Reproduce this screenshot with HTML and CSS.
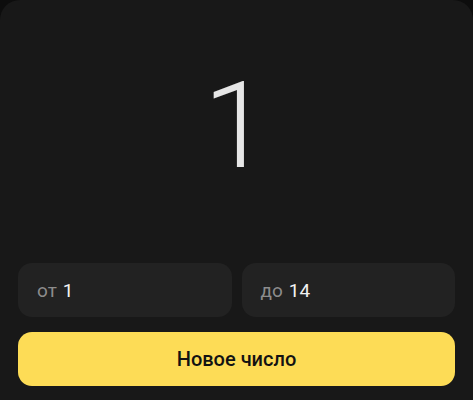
FILE: index.html
```html
<!DOCTYPE html>
<html lang="ru">
<head>
  <meta charset="UTF-8" />
  <title>Случайное число</title>
  <meta name="viewport" content="width=device-width, initial-scale=1.0" />
  <link rel="stylesheet" href="styles.css">
</head>
<body>
  <div class="card">
    <!-- Result -->
    <div class="display">
      <span id="result" class="number">1</span>
    </div>

    <!-- Range -->
    <div class="range">
      <label class="field">
        <span class="hint">от</span>
        <input id="min" type="text" value="1" />
      </label>
      <label class="field">
        <span class="hint">до</span>
        <input id="max" type="text" value="14" />
      </label>
    </div>

    <button id="roll" class="btn">Новое число</button>
  </div>

  <script>
    const minEl = document.getElementById("min");
    const maxEl = document.getElementById("max");
    const resultEl = document.getElementById("result");

    document.getElementById("roll").addEventListener("click", () => {
      let a = parseInt(minEl.value, 10) || 0;
      let b = parseInt(maxEl.value, 10) || 0;
      if (a > b) [a, b] = [b, a];
      resultEl.textContent = a + Math.floor(Math.random() * (b - a + 1));
    });
  </script>
</body>
</html>
```

FILE: styles.css
```css
/* ===== Base ===== */
body {
  margin: 0;
  background: #0d0d0d;
  font-family: Roboto, "Noto Sans", sans-serif;
  color: #ececec;
}
.card {
  background: #181818;
  border-radius: 20px 20px 0 0;
  padding: 0 18px 14px;
  min-height: 400px;
  box-sizing: border-box;
}

/* ===== Result ===== */
.display {
  height: 252px;
  padding-bottom: 11px;
  display: flex;
  align-items: center;
  justify-content: center;
}
.number {
  font-size: 120px;
  font-weight: 300;
  line-height: 1;
  color: #e6e6e6;
}

/* ===== Range ===== */
.range {
  display: grid;
  grid-template-columns: minmax(0, 1fr) minmax(0, 1fr);
  gap: 10px;
}
.field {
  display: flex;
  align-items: center;
  gap: 6px;
  height: 54px;
  padding: 0 19px;
  background: #222222;
  border-radius: 14px;
  font-size: 19px;
}
.hint {
  color: #8c8c8c;
}
.field input {
  flex: 1;
  min-width: 0;
  width: 100%;
  padding: 0;
  border: none;
  outline: none;
  background: transparent;
  font: inherit;
  color: #f2f2f2;
}

/* ===== Button ===== */
.btn {
  display: block;
  width: 100%;
  height: 54px;
  margin-top: 15px;
  border: none;
  border-radius: 14px;
  background: #fddc56;
  color: #121212;
  font-family: inherit;
  font-size: 20px;
  font-weight: 500;
  cursor: pointer;
}
```
